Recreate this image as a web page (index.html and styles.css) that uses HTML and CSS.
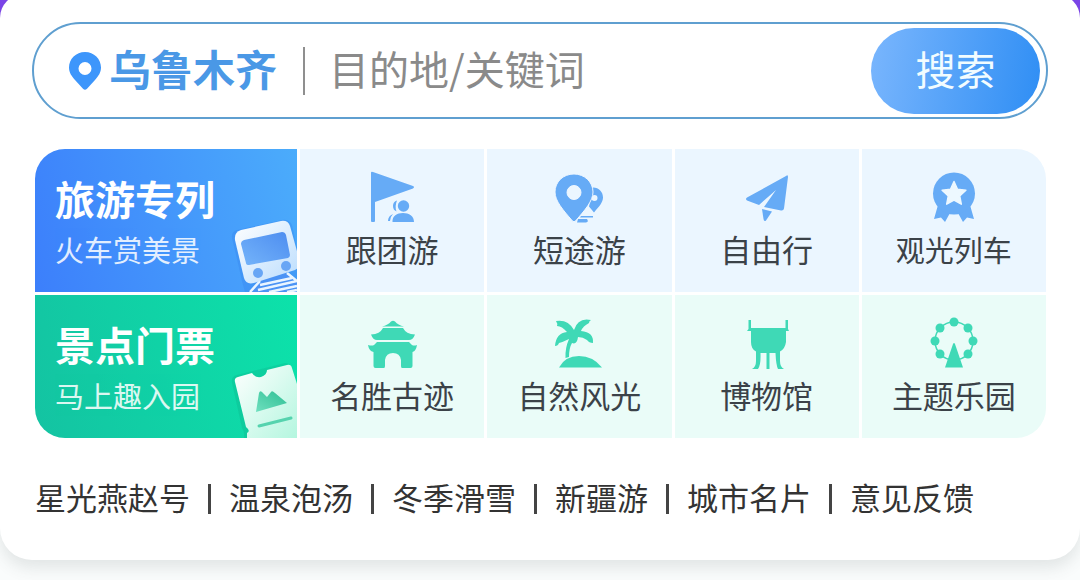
FILE: index.html
```html
<!DOCTYPE html>
<html lang="zh-CN">
<head>
  <meta charset="UTF-8" />
  <meta name="viewport" content="width=device-width, initial-scale=1.0"/>
  <title>旅游</title>
  <link rel="stylesheet" href="styles.css">
</head>
<body>
  <main class="card">
    <form class="search">
      <button type="button" class="city">
        <svg class="city-pin" viewBox="0 0 32 38" aria-hidden="true">
          <path fill="#3d96fb" fill-rule="evenodd" d="M16 0C7 0 0 7 0 15.500c0 5 2.500 8.500 6 12.500l8 8.800q2 2 4 0l8-8.800c3.500-4 6-7.500 6-12.500C32 7 25 0 16 0zm0 10a6.500 6.500 0 1 1 0 13a6.500 6.500 0 1 1 0-13z"/>
        </svg>
        <span class="city-name">乌鲁木齐</span>
      </button>
      <input class="keyword" type="text" placeholder="目的地/关键词" aria-label="目的地/关键词">
      <button type="submit" class="search-btn">搜索</button>
    </form>

    <nav class="grid">
      <a href="#" class="banner banner-blue">
        <strong class="banner-title">旅游专列</strong>
        <span class="banner-sub">火车赏美景</span>
        <svg class="banner-art" viewBox="0 0 70 80" aria-hidden="true">
          <defs>
            <linearGradient id="trainBody" x1="0" y1="0" x2="1" y2="1">
              <stop offset="0" stop-color="#ffffff"/>
              <stop offset="1" stop-color="#b9dcfd"/>
            </linearGradient>
            <linearGradient id="trainGlass" x1="0" y1="1" x2="1" y2="0">
              <stop offset="0" stop-color="#74b4fa"/>
              <stop offset="1" stop-color="#4d8df0"/>
            </linearGradient>
          </defs>
          <path d="M5 26Q4 20 10 18L55 8Q62 7 65 13L70 36V80H18Q15 70 13 60z" fill="#2f77e6" opacity=".25"/>
          <path d="M22 80L32 68L60 61L70 70V80z" fill="#4b93f5"/>
          <path d="M23 80L33 69M60 61L70 69M33 73L65 66M31 78L70 69M42 80L70 74M60 80L70 78" stroke="#e9f5ff" stroke-width="2.500" fill="none"/>
          <path d="M8 28Q7 20 14 18L54 9Q61 8 63 14L73 50Q74 55 68 58L27 71Q19 73 17 66z" fill="url(#trainBody)"/>
          <path d="M14 32Q14 29 17 28L55 20Q58 20 59 23L63 43Q63 45 61 46L22 53Q19 53 19 51z" fill="url(#trainGlass)"/>
          <circle cx="31" cy="61" r="5" fill="#68a6f5"/>
          <circle cx="59" cy="54" r="5" fill="#68a6f5"/>
        </svg>
      </a>
      <a href="#" class="cell cell-blue">
        <svg class="icon" viewBox="0 0 52 52" aria-hidden="true">
          <path d="M5 2Q5 0 7 1L47 15Q49 16 47 17.500L9 31V50Q9 51 8 51H6Q5 51 5 50z"/>
          <circle cx="37.500" cy="35" r="5.700"/>
          <path d="M26.500 51C26 45 31 42 37 42s11 3 11 9z"/>
          <path d="M31 29.500q-4 1-4 5.500q0 4 3.500 5.500q-2-5 .5-11zM27 43q-5 2-5 7h2q0-4 3-7z"/>
        </svg>
        <span>跟团游</span>
      </a>
      <a href="#" class="cell cell-blue">
        <svg class="icon" viewBox="0 0 52 52" aria-hidden="true">
          <path fill-rule="evenodd" d="M40 16.500c6 0 10 4.500 10 10c0 5-4 9-9 15l-5-6zm1.500 7.500a3 3 0 1 0 0 6a3 3 0 1 0 0-6z"/>
          <path d="M28 45h12v1.500H27zM25 48h9q2 3-1 3.500h-9z"/>
          <path stroke="#edf6ff" stroke-width="1" fill-rule="evenodd" d="M21 3C10 3 2 11 2 21c0 9 8 18 17.500 29q1.500 1.500 3 0C32 39 40 30 40 21C40 11 31.500 3 21 3zm0 11.500a7 7 0 1 1 0 14a7 7 0 1 1 0-14z"/>
        </svg>
        <span>短途游</span>
      </a>
      <a href="#" class="cell cell-blue">
        <svg class="icon" viewBox="0 0 52 52" aria-hidden="true">
          <path d="M45 5Q47 3 47 6L43 37.500Q42.500 40 40 39.500L23 36L35 19L18 34L6 29.500Q4 28 6 26.500z"/>
          <path d="M21 38L31 40.500L25 49.500Q23 51 22.500 48z"/>
        </svg>
        <span>自由行</span>
      </a>
      <a href="#" class="cell cell-blue">
        <svg class="icon" viewBox="0 0 52 52" aria-hidden="true">
          <path d="M10 34L6 48L13 46.500L17 51L22 42H30L35 51L39 46.500L46 48L42 34z"/>
          <circle cx="26" cy="22.500" r="21"/>
          <path fill="#edf8ff" stroke="#edf8ff" stroke-width="1.500" stroke-linejoin="round" d="M26 10.500l3.500 7.700l8.400 1l-6.200 5.700l1.600 8.300l-7.300-4.100l-7.300 4.100l1.600-8.300l-6.200-5.700l8.400-1z"/>
        </svg>
        <span class="label-small">观光列车</span>
      </a>

      <a href="#" class="banner banner-green">
        <strong class="banner-title">景点门票</strong>
        <span class="banner-sub">马上趣入园</span>
        <svg class="banner-art" viewBox="0 0 70 80" aria-hidden="true">
          <defs>
            <linearGradient id="ticketBody" x1="0" y1="0" x2="1" y2="1">
              <stop offset="0" stop-color="#ffffff"/>
              <stop offset="1" stop-color="#b4f6df"/>
            </linearGradient>
            <linearGradient id="ticketHill" x1="0" y1="1" x2="1" y2="0">
              <stop offset="0" stop-color="#6fe0bf"/>
              <stop offset="1" stop-color="#2fbf94"/>
            </linearGradient>
          </defs>
          <path d="M5 25Q4 18 10 17L58 5Q64 5 66 12L70 30V80H17Q18 74 15 70z" fill="#0a9d77" opacity=".2"/>
          <path d="M8 24Q7 20 11 19L25 15Q28 20 34 19Q40 17 40 12L60 7Q64 6 65 10L70 26V80H20V75Q24 73 19 69z" fill="url(#ticketBody)"/>
          <path d="M29 54L32 35Q33 32 35 34L40 39L44 34Q45 32 48 35L60 45z" fill="url(#ticketHill)"/>
          <path d="M32 68L64 60" stroke="#55d3ae" stroke-width="3" stroke-linecap="round"/>
        </svg>
      </a>
      <a href="#" class="cell cell-green">
        <svg class="icon" viewBox="0 0 52 52" aria-hidden="true">
          <path d="M16 9.500Q22 8 25 4.500Q27 3 29 4.500Q32 8 38 9.500z"/>
          <path d="M17 11H37Q40 17 49 17.500Q47 23 43 23H11Q7 23 5 17.500Q14 17 17 11z"/>
          <path d="M11 25H43L46 28Q48 29 51 28Q50 34 46.500 35V49Q46.500 51 44.500 51H36Q35 51 35 49V43Q34 36 27 36T19 43V49Q19 51 18 51H9.500Q7.500 51 7.500 49V35Q3 34 2 28Q6 29 8 28z"/>
        </svg>
        <span>名胜古迹</span>
      </a>
      <a href="#" class="cell cell-green">
        <svg class="icon" viewBox="0 0 52 52" aria-hidden="true">
          <path d="M21 13Q15 2 3 4Q5 7 4 9Q9 9 14 15Q3 16 2 29Q5 29 6 26Q10 25 16 22Q12 31 12.500 41L16 40Q16 31 19 26Q24 28 25 20Q30 20 34 23Q36 26 40 26Q41 15 28 14Q30 9 36 6Q36 4 38 3Q25 0 21 13z"/>
          <path d="M6 50.500Q12 39 26 39T49 50.500z"/>
        </svg>
        <span>自然风光</span>
      </a>
      <a href="#" class="cell cell-green">
        <svg class="icon" viewBox="0 0 52 52" aria-hidden="true">
          <path d="M7.500 3H10V11H44.500V3H47V12L48 14H45V25Q44 32 39 34.500V44Q39 50 43 52H37Q35 48 34.500 36H28.500V52H25.500V36H19.500Q20 48 17 52H11Q15 50 15 44V34.500Q10 32 10 25V14H6L7.500 12z"/>
        </svg>
        <span>博物馆</span>
      </a>
      <a href="#" class="cell cell-green">
        <svg class="icon" viewBox="0 0 52 52" aria-hidden="true">
          <circle cx="26" cy="24" r="19" fill="none" stroke="#3fd9b6" stroke-width="1.500"/>
          <circle cx="26" cy="5" r="4.500"/>
          <circle cx="40" cy="11" r="4.500"/>
          <circle cx="45" cy="24" r="4.500"/>
          <circle cx="40" cy="37" r="4.500"/>
          <circle cx="12" cy="37" r="4.500"/>
          <circle cx="7" cy="24" r="4.500"/>
          <circle cx="12" cy="11" r="4.500"/>
          <path d="M25 27Q26 25 27 27L35 50.500H17z"/>
        </svg>
        <span>主题乐园</span>
      </a>
    </nav>

    <nav class="links">
      <a href="#">星光燕赵号</a>
      <a href="#">温泉泡汤</a>
      <a href="#">冬季滑雪</a>
      <a href="#">新疆游</a>
      <a href="#">城市名片</a>
      <a href="#">意见反馈</a>
    </nav>
  </main>
</body>
</html>
```
FILE: styles.css
```css
* {
  box-sizing: border-box;
}
html {
  background: #fafcfc;
}
body {
  display: flow-root;
  min-height: 100vh;
  margin: 0;
  font-family: "Noto Sans CJK SC", "Noto Sans", sans-serif;
  background: linear-gradient(#7c45ea, #7c45ea) no-repeat 0 0 / 100% 60px;
}
a {
  color: inherit;
  text-decoration: none;
}
button {
  padding: 0;
  border: none;
  background: none;
  font-family: inherit;
  cursor: pointer;
}
.card {
  margin-top: -6px;
  padding: 28px 32px 41px;
  background: #fff;
  border-radius: 24px 24px 32px 32px;
  box-shadow: 0 8px 16px rgba(60, 80, 80, 0.13);
}

/* search bar */
.search {
  display: flex;
  align-items: center;
  height: 97px;
  padding: 0 6px 0 35px;
  border: 2px solid #5f9fd0;
  border-radius: 49px;
}
.city {
  display: flex;
  align-items: center;
  gap: 8px;
  font-size: 42px;
  font-weight: bold;
  line-height: 48px;
  color: #4a98e6;
}
.city-pin {
  width: 32px;
  height: 38px;
}
.city-name {
  padding-bottom: 6px;
}
.keyword {
  flex: 1;
  min-width: 0;
  height: 48px;
  margin-left: 26px;
  padding: 0 0 6px 24px;
  border: none;
  border-left: 2px solid #8f8f8f;
  outline: none;
  background: none;
  font-family: inherit;
  font-size: 40px;
  color: #333;
}
.keyword::placeholder {
  color: #8a8a8a;
  opacity: 1;
}
.search-btn {
  width: 169px;
  height: 86px;
  padding-bottom: 6px;
  border-radius: 43px;
  background: linear-gradient(100deg, #7ab6fd, #2f8ef4);
  font-size: 40px;
  line-height: 48px;
  color: #f2fcff;
}

/* category grid */
.grid {
  display: grid;
  grid-template-columns: 262px repeat(4, 1fr);
  grid-auto-rows: 143px;
  gap: 3px;
  margin: 30px 2px 0 3px;
  border-radius: 30px;
  overflow: hidden;
}
.banner {
  position: relative;
  display: flex;
  flex-direction: column;
  gap: 9px;
  padding: 25px 0 0 20px;
  color: #fff;
}
.banner-blue {
  background: linear-gradient(75deg, #3c7ffb, #4bacfb);
}
.banner-green {
  background: linear-gradient(75deg, #14c3a2, #0ce2aa);
}
.banner-title {
  font-size: 40px;
  line-height: 48px;
}
.banner-sub {
  font-size: 29px;
  line-height: 36px;
  opacity: 0.85;
}
.banner-art {
  position: absolute;
  right: 0;
  bottom: 0;
  width: 70px;
  height: 80px;
}
.cell {
  display: flex;
  flex-direction: column;
  align-items: center;
  gap: 8px;
  padding-top: 22px;
  font-size: 31px;
  line-height: 36px;
  color: #3b4248;
}
.cell-blue {
  background: #ebf6ff;
}
.cell-green {
  background: #eafcf8;
}
.icon {
  width: 52px;
  height: 52px;
}
.cell-blue .icon {
  fill: #66abf6;
}
.cell-green .icon {
  fill: #3fd9b6;
}
.label-small {
  font-size: 29px;
}

/* text links */
.links {
  display: flex;
  margin: 37px 0 0 3px;
  font-size: 31px;
  line-height: 44px;
  color: #333;
}
.links a {
  display: flex;
  align-items: center;
}
.links a + a::before {
  content: "";
  width: 3px;
  height: 30px;
  margin: 4px 18px 0;
  background: #444;
}
```
